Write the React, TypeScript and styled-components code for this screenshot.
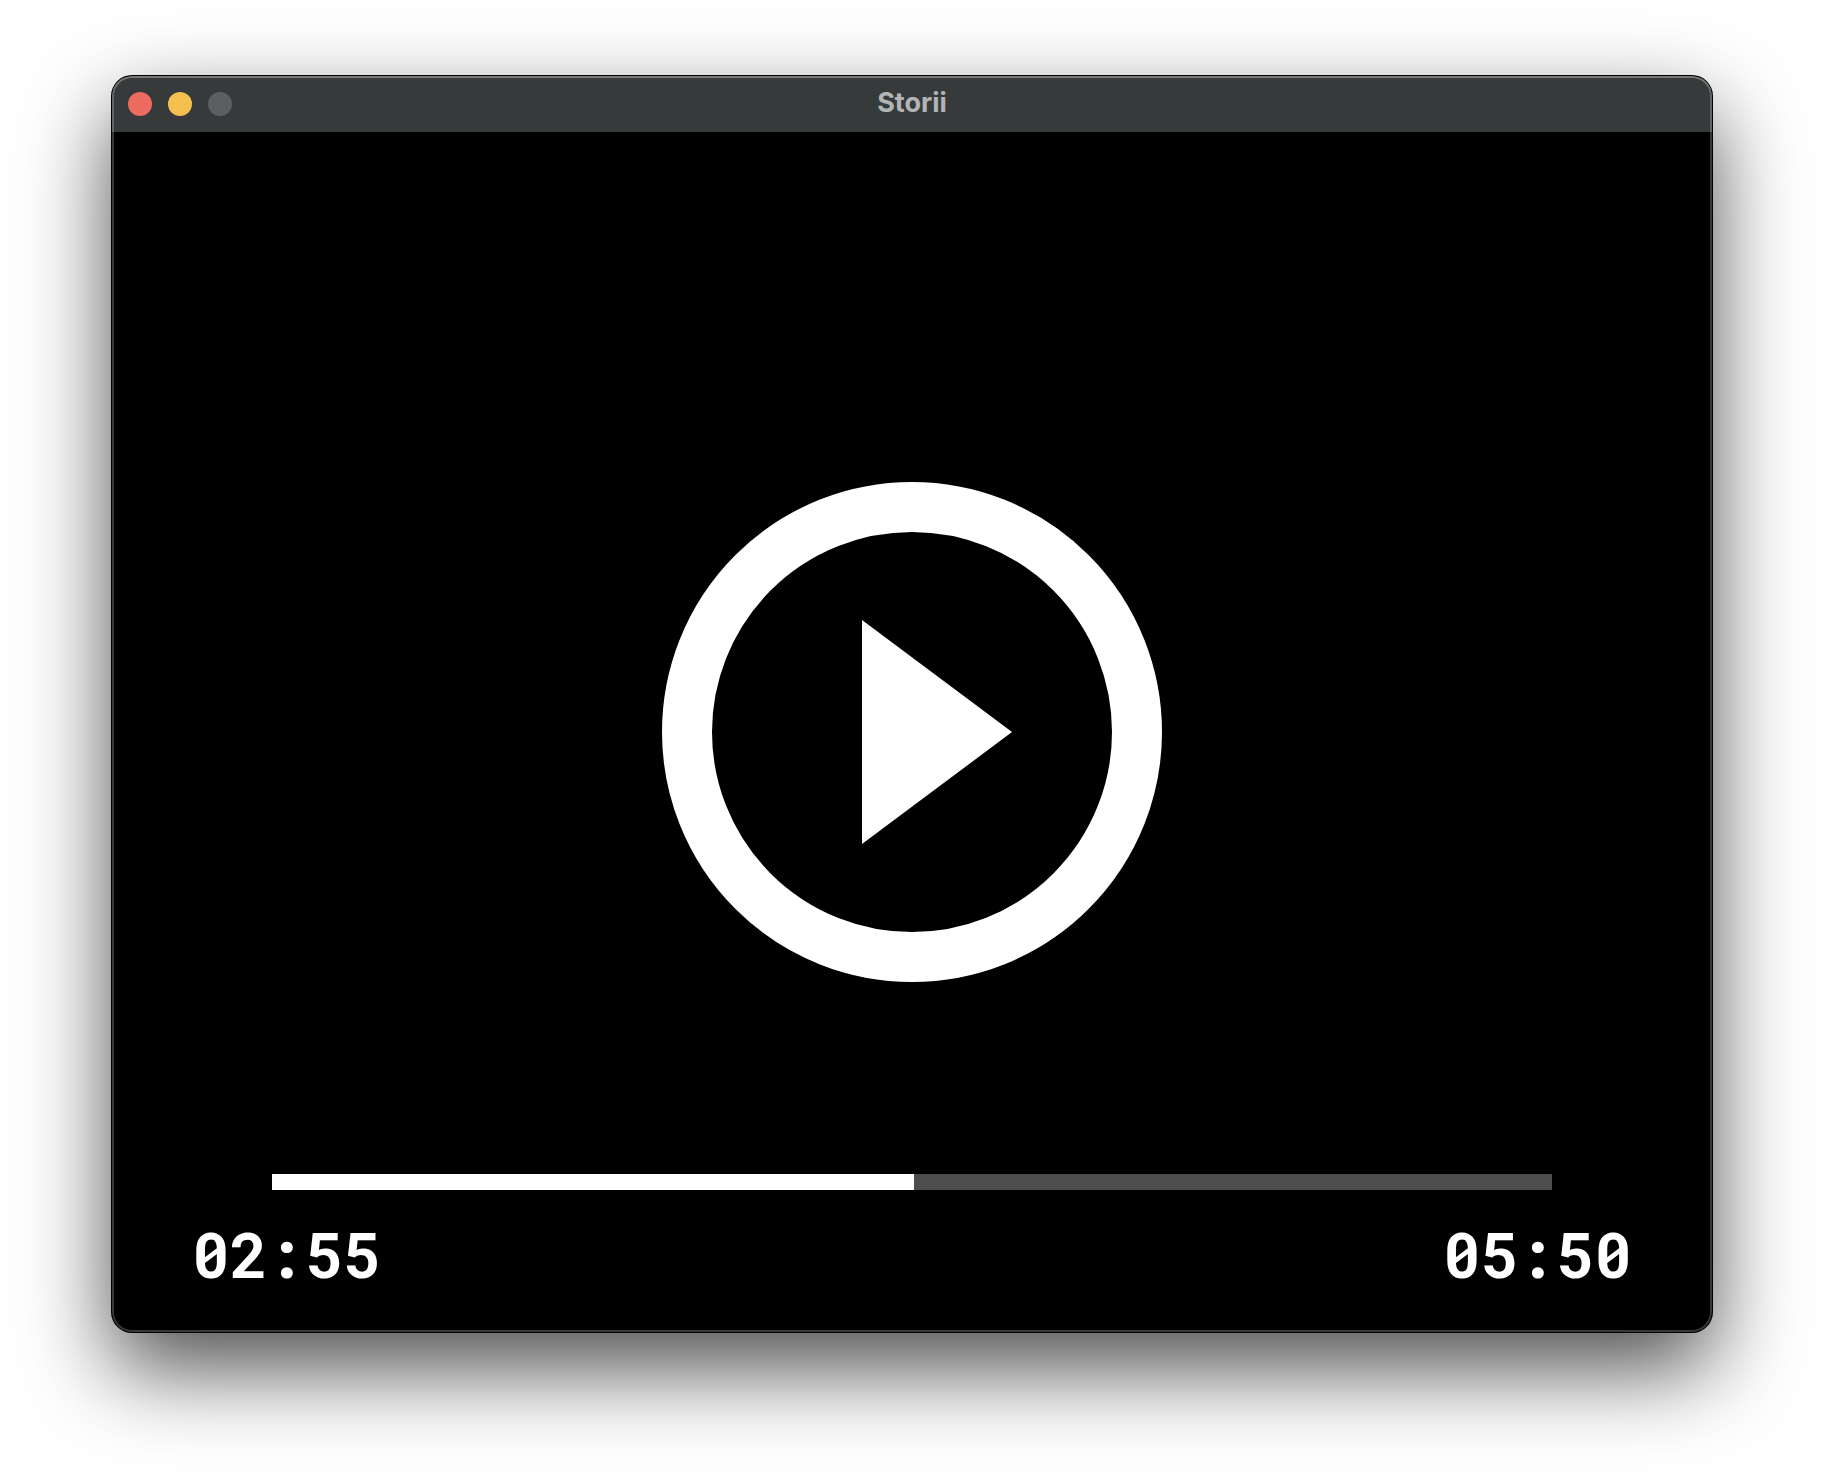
import React, { useState } from "react";
import styled, { createGlobalStyle } from "styled-components";

const GlobalStyle = createGlobalStyle`
  *, *::before, *::after { box-sizing: border-box; }
  body { margin: 0; background: #fff; }
`;

const Desktop = styled.div`
  display: flex;
  min-height: 100vh;
  padding: 76px 112px 148px;
`;

const Window = styled.main`
  position: relative;
  flex: 1;
  display: flex;
  flex-direction: column;
  overflow: hidden;
  border-radius: 20px;
  background: #000;
  box-shadow: 0 0 0 1px #000, 0 36px 88px rgba(0, 0, 0, 0.7);

  /* Light rim that runs round the inside of the window edge, brighter at the top */
  &::after {
    content: "";
    position: absolute;
    inset: 0;
    border-radius: inherit;
    box-shadow: inset 0 0 0 2px rgba(255, 255, 255, 0.22), inset 0 2px 0 rgba(255, 255, 255, 0.12);
    pointer-events: none;
  }
`;

const TitleBar = styled.header`
  display: grid;
  grid-template-columns: 1fr auto 1fr;
  align-items: center;
  height: 56px;
  padding: 0 16px;
  background: #373a3b;
`;

const TrafficLights = styled.div`
  display: flex;
  gap: 16px;
`;

const Light = styled.button<{ $color: string }>`
  width: 24px;
  height: 24px;
  padding: 0;
  border: 0;
  border-radius: 50%;
  background: ${({ $color }) => $color};
`;

const Title = styled.h1`
  margin: 0;
  padding-bottom: 2px;
  font: 700 27px/32px Inter, sans-serif;
  color: #b2b5b6;
`;

const Stage = styled.section`
  flex: 1;
  display: grid;
`;

const PlayButton = styled.button`
  grid-area: 1 / 1;
  place-self: center;
  width: 500px;
  height: 500px;
  padding: 0;
  border: 0;
  border-radius: 50%;
  background: none;
  color: #fff;

  svg { display: block; }
`;

const Controls = styled.div`
  grid-area: 1 / 1;
  align-self: end;
  display: flex;
  flex-direction: column;
  gap: 24px;
  padding: 0 80px 38px;
`;

const SeekBar = styled.input`
  appearance: none;
  height: 16px;
  margin: 0 80px;
  background: #4d4d4d;

  &::-webkit-slider-thumb {
    appearance: none;
    width: 0;
    height: 16px;
  }
`;

const Times = styled.div`
  display: flex;
  justify-content: space-between;
`;

const Time = styled.time`
  font: 700 63px/80px "Roboto Mono", "DejaVu Sans Mono", monospace;
  color: #fff;
`;

const DURATION = 350;

const clock = (seconds: number) => {
  const whole = Math.floor(seconds);
  return `${String(Math.floor(whole / 60)).padStart(2, "0")}:${String(whole % 60).padStart(2, "0")}`;
};

export default function App() {
  const [position, setPosition] = useState(175.5);
  const played = (position / DURATION) * 100;

  return (
    <>
      <GlobalStyle />
      <Desktop>
        <Window>
          <TitleBar>
            <TrafficLights>
              <Light $color="#ed6b60" aria-label="Close" />
              <Light $color="#f5bf4f" aria-label="Minimize" />
              <Light $color="#5b5f60" aria-label="Zoom" disabled />
            </TrafficLights>
            <Title>Storii</Title>
          </TitleBar>
          <Stage>
            <PlayButton aria-label="Play">
              <svg width="500" height="500" viewBox="-250 -250 500 500" aria-hidden="true">
                <circle r="225" fill="none" stroke="currentColor" strokeWidth="50" />
                <path d="M-50-112 100 0-50 112Z" fill="currentColor" />
              </svg>
            </PlayButton>
            <Controls>
              <SeekBar
                type="range"
                aria-label="Seek"
                min={0}
                max={DURATION}
                step={0.5}
                value={position}
                onChange={(event) => setPosition(Number(event.target.value))}
                style={{ backgroundImage: `linear-gradient(to right, #fff ${played}%, #4d4d4d ${played}%)` }}
              />
              <Times>
                <Time>{clock(position)}</Time>
                <Time>{clock(DURATION)}</Time>
              </Times>
            </Controls>
          </Stage>
        </Window>
      </Desktop>
    </>
  );
}
